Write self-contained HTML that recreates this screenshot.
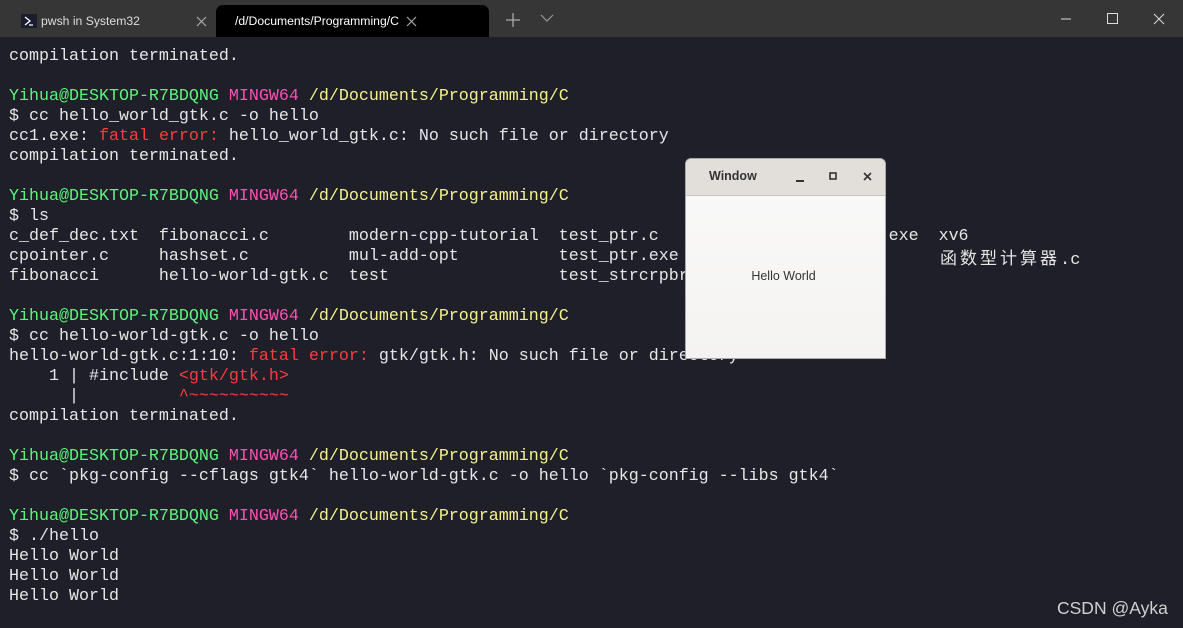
<!DOCTYPE html><html><head><meta charset="utf-8"><style>
body{margin:0;width:1183px;height:628px;overflow:hidden;background:#1f1f29;font-family:"Liberation Sans",sans-serif;position:relative}
.bar{position:absolute;left:0;top:0;width:1183px;height:37px;background:#363636}
.tab{position:absolute;top:5px;height:32px;color:#fff;font-size:12.2px;line-height:32px}
pre{position:absolute;left:9px;top:47px;margin:0;font-family:"Liberation Mono","Noto Sans CJK SC",monospace;font-size:16.67px;line-height:20px;color:#e6e6e6;white-space:pre}
.g{color:#5af57a}.m{color:#ff4fb4}.y{color:#f5f28a}.r{color:#ff3b3b}
.cj{position:absolute;left:940px;top:247px;font-family:"Noto Sans CJK SC",sans-serif;font-size:17px;line-height:20px;color:#e6e6e6;letter-spacing:3px}
</style></head><body>
<div class="bar"></div>
<div class="tab" style="left:10px;width:230px">
<svg style="position:absolute;left:11px;top:9px" width="16" height="14"><rect width="16" height="14" fill="#1a1d2e"/><path d="M4 3l5 4-5 4M8 11h4" stroke="#fff" stroke-width="1.3" fill="none"/></svg>
<span style="position:absolute;left:31px;color:#ddd">pwsh in System32</span>
<svg style="position:absolute;left:186px;top:11px" width="11" height="11"><path d="M1 1l9 9M10 1l-9 9" stroke="#aaa" stroke-width="1.2"/></svg></div>
<div class="tab" style="left:216px;width:273px;background:#000;border-radius:7px 7px 0 0">
<span style="position:absolute;left:19px">/d/Documents/Programming/C</span>
<svg style="position:absolute;left:190px;top:11px" width="11" height="11"><path d="M1 1l9 9M10 1l-9 9" stroke="#aaa" stroke-width="1.2"/></svg></div>
<svg style="position:absolute;left:506px;top:13px" width="14" height="14"><path d="M7 0v14M0 7h14" stroke="#aaa" stroke-width="1.3"/></svg>
<svg style="position:absolute;left:540px;top:14px" width="14" height="9"><path d="M1 1l6 6 6-6" stroke="#999" fill="none" stroke-width="1.2"/></svg>
<svg style="position:absolute;left:1060px;top:12px" width="110" height="14"><path d="M1 7h10" stroke="#ddd"/><rect x="47.5" y="1.5" width="10" height="10" stroke="#ddd" fill="none"/><path d="M94 2l10 10M104 2l-10 10" stroke="#ddd"/></svg>
<pre>compilation terminated.

<span class="g">Yihua@DESKTOP-R7BDQNG</span> <span class="m">MINGW64</span> <span class="y">/d/Documents/Programming/C</span>
$ cc hello_world_gtk.c -o hello
cc1.exe: <span class="r">fatal error: </span>hello_world_gtk.c: No such file or directory
compilation terminated.

<span class="g">Yihua@DESKTOP-R7BDQNG</span> <span class="m">MINGW64</span> <span class="y">/d/Documents/Programming/C</span>
$ ls
c_def_dec.txt  fibonacci.c        modern-cpp-tutorial  test_ptr.c                       exe  xv6
cpointer.c     hashset.c          mul-add-opt          test_ptr.exe
fibonacci      hello-world-gtk.c  test                 test_strcrpbrk

<span class="g">Yihua@DESKTOP-R7BDQNG</span> <span class="m">MINGW64</span> <span class="y">/d/Documents/Programming/C</span>
$ cc hello-world-gtk.c -o hello
hello-world-gtk.c:1:10: <span class="r">fatal error: </span>gtk/gtk.h: No such file or directory
    1 | #include <span class="r">&lt;gtk/gtk.h&gt;</span>
      |          <span class="r">^~~~~~~~~~~</span>
compilation terminated.

<span class="g">Yihua@DESKTOP-R7BDQNG</span> <span class="m">MINGW64</span> <span class="y">/d/Documents/Programming/C</span>
$ cc `pkg-config --cflags gtk4` hello-world-gtk.c -o hello `pkg-config --libs gtk4`

<span class="g">Yihua@DESKTOP-R7BDQNG</span> <span class="m">MINGW64</span> <span class="y">/d/Documents/Programming/C</span>
$ ./hello
Hello World
Hello World
Hello World</pre>
<div class="cj">函数型计算器<span style="font-family:'Liberation Mono',monospace;letter-spacing:0">.c</span></div>
<div style="position:absolute;left:685px;top:158px;width:199px;height:199px;border:1px solid #aaa;border-radius:6px 6px 0 0;background:linear-gradient(#fafafa,#f4f3f1);overflow:hidden">
<div style="height:36px;background:#e2dfdb;border-bottom:1px solid #c9c5c0;position:relative;font-size:12.5px;font-weight:bold;color:#333">
<span style="position:absolute;left:23px;top:10px">Window</span>
<svg style="position:absolute;left:108px;top:12px" width="80" height="12"><path d="M2 10h8" stroke="#333" stroke-width="2"/><rect x="36" y="2" width="6" height="6" stroke="#333" stroke-width="1.6" fill="none"/><path d="M70 2l7 7M77 2l-7 7" stroke="#333" stroke-width="1.6"/></svg></div>
<div style="position:absolute;top:110px;left:-2px;width:199px;text-align:center;font-size:12.5px;color:#333">Hello World</div>
</div>
<div style="position:absolute;left:1057px;top:598px;color:#d0d0d0;font-size:17.5px">CSDN @Ayka</div>
</body></html>
